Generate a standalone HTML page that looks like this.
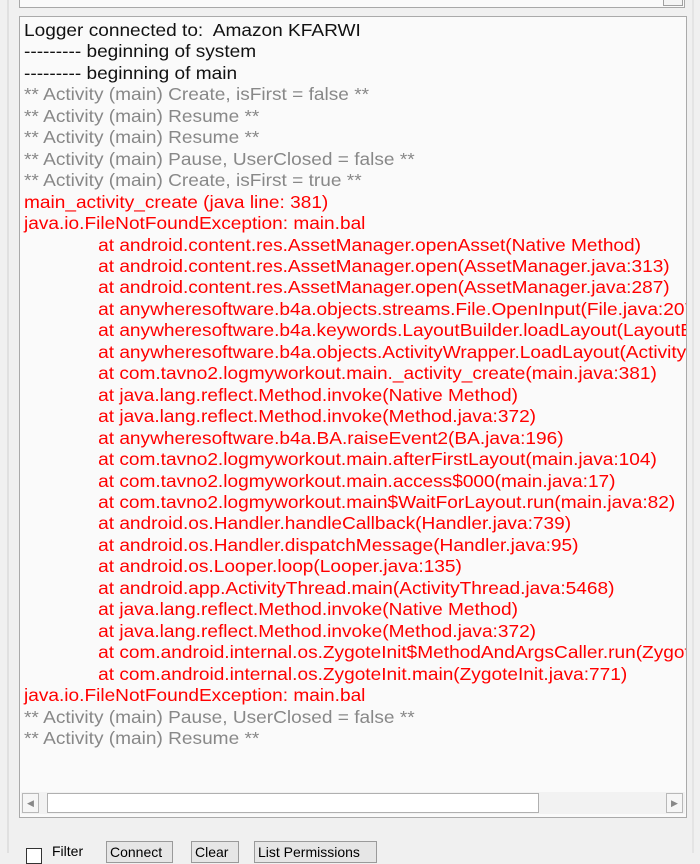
<!DOCTYPE html>
<html><head><meta charset="utf-8"><style>
html,body{margin:0;padding:0;width:700px;height:853px;overflow:hidden;background:#f0f0f0;font-family:"Liberation Sans","DejaVu Sans",sans-serif;}
.vl{position:absolute;left:7px;top:0;width:2px;height:853px;background:#e0e0e0}
.vr{position:absolute;left:692px;top:0;width:2px;height:853px;background:#e4e4e4}
.top{position:absolute;left:19px;top:-10px;width:664px;height:16px;border:1px solid #a8a8a8;background:#fafafa}
.topbtn{position:absolute;left:663px;top:-10px;width:18px;height:14px;border:1px solid #a0a0a0;background:#f4f4f4}
.box{position:absolute;left:19px;top:16px;width:666px;height:800px;border:1px solid #aaa;background:#fafafa;overflow:hidden}
.log{position:absolute;left:4px;top:3px;white-space:pre;font-size:17.5px;line-height:21.45px;color:#111;transform:scaleX(1.09);transform-origin:0 0}
.g{color:#888}.r{color:#f00}
.i{padding-left:68px}
.sb{position:absolute;left:1px;top:775px;width:664px;height:22px;background:#f2f2f2}
.arr{position:absolute;top:1px;width:15px;height:18px;border:1px solid #b8b8b8;background:#f6f6f6;font-size:9px;color:#888;text-align:center;line-height:18px}
.thumb{position:absolute;left:26px;top:1px;width:490px;height:18px;border:1px solid #b0b0b0;background:#fff}
.btn{position:absolute;top:841px;height:20px;border:1px solid #9a9a9a;background:#e6e6e6;font-size:14px;line-height:20px;padding-left:3px;color:#000;overflow:hidden}
</style></head><body>
<div class="vl"></div><div class="vr"></div>
<div class="top"></div><div class="topbtn"></div>
<div class="box">
<div class="log">Logger connected to:  Amazon KFARWI
--------- beginning of system
--------- beginning of main
<span class="g">** Activity (main) Create, isFirst = false **
** Activity (main) Resume **
** Activity (main) Resume **
** Activity (main) Pause, UserClosed = false **
** Activity (main) Create, isFirst = true **</span>
<span class="r">main_activity_create (java line: 381)
java.io.FileNotFoundException: main.bal
<span class="i">at android.content.res.AssetManager.openAsset(Native Method)</span>
<span class="i">at android.content.res.AssetManager.open(AssetManager.java:313)</span>
<span class="i">at android.content.res.AssetManager.open(AssetManager.java:287)</span>
<span class="i">at anywheresoftware.b4a.objects.streams.File.OpenInput(File.java:207)</span>
<span class="i">at anywheresoftware.b4a.keywords.LayoutBuilder.loadLayout(LayoutBuilder.java)</span>
<span class="i">at anywheresoftware.b4a.objects.ActivityWrapper.LoadLayout(ActivityWrapper.java)</span>
<span class="i">at com.tavno2.logmyworkout.main._activity_create(main.java:381)</span>
<span class="i">at java.lang.reflect.Method.invoke(Native Method)</span>
<span class="i">at java.lang.reflect.Method.invoke(Method.java:372)</span>
<span class="i">at anywheresoftware.b4a.BA.raiseEvent2(BA.java:196)</span>
<span class="i">at com.tavno2.logmyworkout.main.afterFirstLayout(main.java:104)</span>
<span class="i">at com.tavno2.logmyworkout.main.access$000(main.java:17)</span>
<span class="i">at com.tavno2.logmyworkout.main$WaitForLayout.run(main.java:82)</span>
<span class="i">at android.os.Handler.handleCallback(Handler.java:739)</span>
<span class="i">at android.os.Handler.dispatchMessage(Handler.java:95)</span>
<span class="i">at android.os.Looper.loop(Looper.java:135)</span>
<span class="i">at android.app.ActivityThread.main(ActivityThread.java:5468)</span>
<span class="i">at java.lang.reflect.Method.invoke(Native Method)</span>
<span class="i">at java.lang.reflect.Method.invoke(Method.java:372)</span>
<span class="i">at com.android.internal.os.ZygoteInit$MethodAndArgsCaller.run(ZygoteInit.java)</span>
<span class="i">at com.android.internal.os.ZygoteInit.main(ZygoteInit.java:771)</span>
java.io.FileNotFoundException: main.bal</span>
<span class="g">** Activity (main) Pause, UserClosed = false **
** Activity (main) Resume **</span></div>
<div class="sb">
<div class="arr" style="left:1px">&#9664;</div>
<div class="thumb"></div>
<div class="arr" style="left:645px">&#9654;</div>
</div>
</div>
<div style="position:absolute;left:26px;top:848px;width:14px;height:14px;border:1px solid #333;background:#fff"></div>
<div style="position:absolute;left:52px;top:843px;font-size:14px">Filter</div>
<div class="btn" style="left:106px;width:62px">Connect</div>
<div class="btn" style="left:191px;width:43px">Clear</div>
<div class="btn" style="left:254px;width:118px">List Permissions</div>
</body></html>
